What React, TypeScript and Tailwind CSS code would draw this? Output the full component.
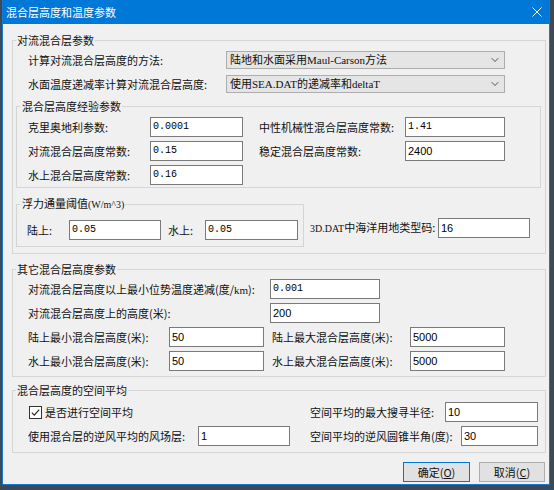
import React from 'react';
import { ChevronDown } from 'lucide-react';

type FieldProps = { value: string; width: string; mono?: boolean };

// plain read-only text box in the classic dialog style
const Field: React.FC<FieldProps> = ({ value, width, mono }) => (
  <div
    className={`${width} h-[20px] shrink-0 border border-[#7a7a7a] bg-white pl-[2px] flex items-center text-black ${
      mono
        ? "font-['Liberation_Mono',monospace] text-[10px]"
        : "font-['Liberation_Sans',sans-serif] text-[11px]"
    }`}
  >
    {value}
  </div>
);

const Combo: React.FC<{ text: string }> = ({ text }) => (
  <div className="w-[279px] h-[18px] shrink-0 border border-[#adadad] bg-[#e5e5e5] pl-[3px] pr-[3px] flex items-center justify-between">
    <span className="font-['Liberation_Serif','Noto_Sans_CJK_SC',serif] text-[11px] whitespace-nowrap">{text}</span>
    <ChevronDown size={12} strokeWidth={1.5} className="text-[#222]" />
  </div>
);

const GroupBox: React.FC<{ title: React.ReactNode; className?: string; children: React.ReactNode }> = ({
  title,
  className = '',
  children,
}) => (
  <fieldset className={`border border-[#d5d5d5] ${className}`}>
    <legend className="ml-[3px] px-[1px] leading-[14px]">{title}</legend>
    {children}
  </fieldset>
);

const Label: React.FC<{ width: string; children: React.ReactNode; className?: string }> = ({
  width,
  children,
  className = '',
}) => <span className={`${width} shrink-0 whitespace-nowrap ${className}`}>{children}</span>;

export default function App() {
  return (
    <div className="w-[554px] h-[490px] bg-[#3c4a58] pl-[2px] overflow-hidden font-['Noto_Sans_CJK_SC',sans-serif] text-[11px] leading-[14px] text-[#111]">
      <div className="w-[548px] h-[485px] border-x border-b border-[#1a78d0] bg-[#f0f0f0] flex flex-col overflow-hidden">
        {/* title bar */}
        <div className="h-[24px] shrink-0 bg-[#0078d7] pl-[3px] pr-[6px] flex items-center justify-between text-white">
          <span className="text-[11px]">混合层高度和温度参数</span>
          <svg width="10" height="10" viewBox="0 0 10 10" className="mr-[1px]">
            <path d="M0.5 0.5 L9.5 9.5 M9.5 0.5 L0.5 9.5" stroke="#fff" strokeWidth="1" />
          </svg>
        </div>

        <div className="pl-[9px] pr-[3px] flex flex-col">
          {/* convective mixing height */}
          <GroupBox title="对流混合层参数" className="mt-[9px] w-[534px] pb-[6px]">
            <div className="pt-[4px] pl-[15px] flex items-center h-[22px]">
              <Label width="w-[198px]">计算对流混合层高度的方法:</Label>
              <Combo text="陆地和水面采用Maul-Carson方法" />
            </div>
            <div className="mt-[6px] pl-[15px] flex items-center h-[18px]">
              <Label width="w-[198px]">水面温度递减率计算对流混合层高度:</Label>
              <Combo text="使用SEA.DAT的递减率和deltaT" />
            </div>

            <GroupBox title={<span className="ml-[1px]">混合层高度经验参数</span>} className="mt-[6px] ml-[3px] w-[525px] pt-[4px] pb-[2px]">
              <div className="pl-[11px] flex flex-col gap-[4px]">
                <div className="flex items-center">
                  <Label width="w-[122px]">克里奥地利参数:</Label>
                  <Field value="0.0001" width="w-[93px]" mono />
                  <Label width="w-[146px]" className="ml-[16px]">中性机械性混合层高度常数:</Label>
                  <Field value="1.41" width="w-[100px]" mono />
                </div>
                <div className="flex items-center">
                  <Label width="w-[122px]">对流混合层高度常数:</Label>
                  <Field value="0.15" width="w-[93px]" mono />
                  <Label width="w-[146px]" className="ml-[16px]">稳定混合层高度常数:</Label>
                  <Field value="2400" width="w-[100px]" />
                </div>
                <div className="flex items-center">
                  <Label width="w-[122px]">水上混合层高度常数:</Label>
                  <Field value="0.16" width="w-[93px]" mono />
                </div>
              </div>
            </GroupBox>

            <div className="flex items-start">
              <GroupBox
                title={
                  <span className="ml-[1px]">
                    浮力通量阈值<span className="font-['Liberation_Serif',serif] text-[10px]">(W/m^3)</span>
                  </span>
                }
                className="mt-[8px] ml-[3px] w-[288px] pt-[8px] pb-[6px]"
              >
                <div className="pl-[10px] flex items-center">
                  <Label width="w-[42px]">陆上:</Label>
                  <Field value="0.05" width="w-[92px]" mono />
                  <Label width="w-[37px]" className="ml-[7px]">水上:</Label>
                  <Field value="0.05" width="w-[93px]" mono />
                </div>
              </GroupBox>
              <div className="mt-[30px] ml-[6px] flex items-center">
                <Label width="w-[128px]">
                  <span className="font-['Liberation_Serif',serif] text-[10px]">3D.DAT</span>中海洋用地类型码:
                </Label>
                <Field value="16" width="w-[92px]" />
              </div>
            </div>
          </GroupBox>

          {/* other mixing height parameters */}
          <GroupBox title="其它混合层高度参数" className="mt-[8px] w-[534px] pt-[3px] pb-[5px]">
            <div className="pl-[15px] flex flex-col gap-[4px]">
              <div className="flex items-center">
                <Label width="w-[242px]">
                  对流混合层高度以上最小位势温度递减(度/<span className="font-['Liberation_Serif',serif]">km</span>):
                </Label>
                <Field value="0.001" width="w-[110px]" mono />
              </div>
              <div className="flex items-center">
                <Label width="w-[242px]">对流混合层高度上的高度(米):</Label>
                <Field value="200" width="w-[110px]" />
              </div>
              <div className="flex items-center">
                <Label width="w-[141px]">陆上最小混合层高度(米):</Label>
                <Field value="50" width="w-[95px]" />
                <Label width="w-[138px]" className="ml-[8px]">陆上最大混合层高度(米):</Label>
                <Field value="5000" width="w-[95px]" />
              </div>
              <div className="flex items-center">
                <Label width="w-[141px]">水上最小混合层高度(米):</Label>
                <Field value="50" width="w-[95px]" />
                <Label width="w-[138px]" className="ml-[8px]">水上最大混合层高度(米):</Label>
                <Field value="5000" width="w-[95px]" />
              </div>
            </div>
          </GroupBox>

          {/* spatial averaging */}
          <GroupBox title="混合层高度的空间平均" className="mt-[6px] w-[534px] pt-[5px] pb-[6px]">
            <div className="pl-[15px] flex flex-col gap-[4px]">
              <div className="flex items-center">
                <div className="w-[282px] shrink-0 flex items-center">
                  <div className="ml-[1px] w-[13px] h-[13px] border border-[#333] bg-white flex items-center justify-center">
                    <svg width="9" height="9" viewBox="0 0 9 9">
                      <path d="M0.8 4.6 L3.3 7.1 L8.2 1.6" fill="none" stroke="#222" strokeWidth="1.1" />
                    </svg>
                  </div>
                  <span className="ml-[3px]">是否进行空间平均</span>
                </div>
                <Label width="w-[135px]">空间平均的最大搜寻半径:</Label>
                <Field value="10" width="w-[93px]" />
              </div>
              <div className="flex items-center">
                <Label width="w-[170px]">使用混合层的逆风平均的风场层:</Label>
                <Field value="1" width="w-[92px]" />
                <Label width="w-[151px]" className="ml-[20px]">空间平均的逆风圆锥半角(度):</Label>
                <Field value="30" width="w-[77px]" />
              </div>
            </div>
          </GroupBox>

          {/* dialog buttons */}
          <div className="mt-[9px] mr-[1px] flex justify-end gap-[9px]">
            <button className="w-[67px] h-[20px] border border-[#0078d7] bg-[#e1e1e1] flex items-center justify-center">
              确定(<u>O</u>)
            </button>
            <button className="w-[66px] h-[20px] border border-[#adadad] bg-[#e1e1e1] flex items-center justify-center">
              取消(<u>C</u>)
            </button>
          </div>
        </div>
      </div>
    </div>
  );
}
